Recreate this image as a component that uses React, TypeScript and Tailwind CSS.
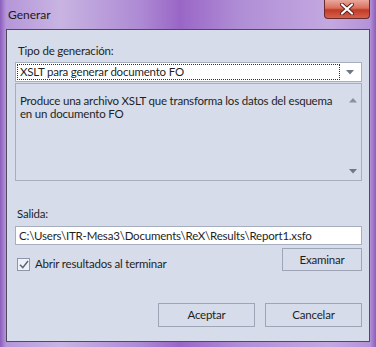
import React from "react";

// Windows 7 style "Generar" dialog
function DownArrow({ className }: { className?: string }) {
  return (
    <svg width="8" height="5" viewBox="0 0 8 5" className={className}>
      <path d="M0 0 H8 L4 4.5 Z" fill="#6f7686" />
    </svg>
  );
}

function UpArrow({ className }: { className?: string }) {
  return (
    <svg width="8" height="5" viewBox="0 0 8 5" className={className}>
      <path d="M0 4.5 H8 L4 0 Z" fill="#8a90a0" />
    </svg>
  );
}

function DialogButton({ label, className }: { label: string; className?: string }) {
  return (
    <button
      className={
        "flex items-center justify-center border border-[#9da5b6] bg-[#d6dcea] text-[11.5px] tracking-[-0.2px] text-[#1f1f1f] " +
        (className ?? "")
      }
    >
      {label}
    </button>
  );
}

export default function App() {
  return (
    <div
      className="flex h-[347px] w-[376px] flex-col bg-[linear-gradient(90deg,#8a5dbb_0px,#b596d9_6px,#c8b4e2_60px,#ae8ad4_140px,#9a66c6_180px,#b08ed6_240px,#c3a8e0_330px,#b493d8_370px,#8a5dbb_376px)] px-[6px] pb-[5px] font-['Lato',sans-serif] text-[#1f1f1f]"
    >
      {/* title bar */}
      <div className="flex h-[29px] shrink-0 items-start">
        <span className="mt-[7px] pl-[2px] text-[12px] leading-[16px] text-[#1a1a1a]">Generar</span>
        <div className="ml-auto flex h-[19px] w-[46px] items-center justify-center rounded-b-[4px] border border-t-0 border-[#6d2a2a] bg-[linear-gradient(180deg,#e9a89c_0%,#d9705d_45%,#c23a26_55%,#d4614c_100%)]">
          <svg width="14" height="12" viewBox="0 0 14 12">
            <path d="M2 1.5 L12 10.5 M12 1.5 L2 10.5" stroke="#5a1e1e" strokeWidth="4" strokeLinecap="round" />
            <path d="M2 1.5 L12 10.5 M12 1.5 L2 10.5" stroke="#ffffff" strokeWidth="2.2" strokeLinecap="round" />
          </svg>
        </div>
      </div>

      {/* client area */}
      <div className="flex flex-1 flex-col border border-[#4f4a5e] bg-[#d6dcea] pl-[8px] pr-[7px] pt-[13px] text-[11.5px] tracking-[-0.2px]">
        <div className="pl-[3px] leading-[16px]">Tipo de generación:</div>

        <div className="mt-[3px] flex h-[20px] items-center border border-[#a7aebd] bg-white pl-[1px] pr-[5px]">
          <div className="flex h-[16px] flex-1 items-center border border-dotted border-[#303030] pl-[2px] leading-[14px]">
            XSLT para generar documento FO
          </div>
          <DownArrow className="ml-[6px] mr-[2px]" />
        </div>

        <div className="mt-[1px] flex h-[98px] border border-[#a7aebd] bg-[#d6dcea]">
          <div className="flex-1 overflow-hidden whitespace-nowrap pl-[4px] pt-[10px] leading-[13px]">
            <div>Produce una archivo XSLT que transforma los datos del esquema</div>
            <div>en un documento FO</div>
          </div>
          <div className="flex w-[17px] flex-col items-center justify-between pb-[6px] pt-[14px]">
            <UpArrow />
            <DownArrow />
          </div>
        </div>

        <div className="mt-[25px] pl-[2px] leading-[16px]">Salida:</div>

        <div className="mt-[4px] flex h-[19px] items-center border border-[#a7aebd] bg-white pl-[3px] leading-[14px]">
          C:\Users\ITR-Mesa3\Documents\ReX\Results\Report1.xsfo
        </div>

        <div className="mt-[3px] flex items-start">
          <label className="mt-[8px] flex items-center gap-[5px] pl-[2px]">
            <span className="flex h-[13px] w-[13px] items-center justify-center border border-[#8e97a8] bg-[#eef1f7]">
              <svg width="10" height="9" viewBox="0 0 10 9">
                <path d="M1 4.8 L3.8 7.6 L9 1" stroke="#5d6474" strokeWidth="1.5" fill="none" />
              </svg>
            </span>
            <span className="leading-[16px]">Abrir resultados al terminar</span>
          </label>
          <DialogButton label="Examinar" className="ml-auto h-[23px] w-[80px]" />
        </div>

        <div className="mt-[31px] flex justify-end gap-[10px]">
          <DialogButton label="Aceptar" className="h-[24px] w-[97px]" />
          <DialogButton label="Cancelar" className="h-[24px] w-[97px]" />
        </div>
      </div>
    </div>
  );
}
